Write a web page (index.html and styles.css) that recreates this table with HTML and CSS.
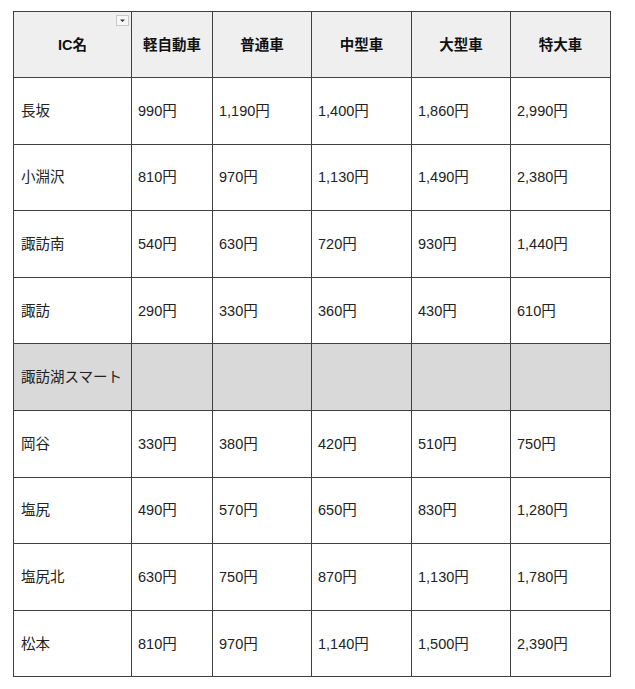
FILE: index.html
```html
<!DOCTYPE html>
<html lang="ja">
<head>
<meta charset="utf-8">
<link rel="stylesheet" href="styles.css">
</head>
<body>
<table class="fares">
  <colgroup>
    <col class="c-name">
    <col class="c-kei">
    <col class="c-w">
    <col class="c-w2">
    <col class="c-w">
    <col class="c-w2">
  </colgroup>
  <thead>
    <tr>
      <th class="th-name">IC名<span class="filter"><svg width="13" height="11" viewBox="0 0 13 11"><rect x="0.5" y="0.5" width="12" height="10" fill="#f7f7f7" stroke="#c8c8c8"/><path d="M4 4.5 L9 4.5 L6.5 7 Z" fill="#333"/></svg></span></th>
      <th>軽自動車</th>
      <th>普通車</th>
      <th>中型車</th>
      <th>大型車</th>
      <th>特大車</th>
    </tr>
  </thead>
  <tbody>
    <tr><td>長坂</td><td>990円</td><td>1,190円</td><td>1,400円</td><td>1,860円</td><td>2,990円</td></tr>
    <tr><td>小淵沢</td><td>810円</td><td>970円</td><td>1,130円</td><td>1,490円</td><td>2,380円</td></tr>
    <tr><td>諏訪南</td><td>540円</td><td>630円</td><td>720円</td><td>930円</td><td>1,440円</td></tr>
    <tr><td>諏訪</td><td>290円</td><td>330円</td><td>360円</td><td>430円</td><td>610円</td></tr>
    <tr class="grey"><td>諏訪湖スマート</td><td></td><td></td><td></td><td></td><td></td></tr>
    <tr><td>岡谷</td><td>330円</td><td>380円</td><td>420円</td><td>510円</td><td>750円</td></tr>
    <tr><td>塩尻</td><td>490円</td><td>570円</td><td>650円</td><td>830円</td><td>1,280円</td></tr>
    <tr><td>塩尻北</td><td>630円</td><td>750円</td><td>870円</td><td>1,130円</td><td>1,780円</td></tr>
    <tr><td>松本</td><td>810円</td><td>970円</td><td>1,140円</td><td>1,500円</td><td>2,390円</td></tr>
  </tbody>
</table>
</body>
</html>
```
FILE: styles.css
```css
html, body {
  margin: 0;
  padding: 0;
  background: #fff;
}
body {
  padding: 11px 0 0 13px;
  font-family: "Liberation Sans", Arial, "Noto Sans CJK JP", sans-serif;
  font-size: 14.5px;
  color: #222;
}
.fares {
  border-collapse: collapse;
  table-layout: fixed;
  width: 598px;
}
.c-name { width: 118px; }
.c-kei { width: 81px; }
.c-w { width: 99px; }
.c-w2 { width: 100px; }
.fares th,
.fares td {
  border: 1px solid #404040;
  padding: 0 0 3px 6px;
  vertical-align: middle;
  white-space: nowrap;
}
.fares thead tr { height: 66px; }
.fares tbody tr { height: 66.6px; }
.fares th {
  background: #efefef;
  font-weight: bold;
  text-align: center;
  padding: 0 0 3px 0;
  color: #111;
}
.th-name {
  position: relative;
}
.fares td:first-child { padding-left: 7px; }
.filter {
  position: absolute;
  top: 3px;
  right: 2px;
  width: 13px;
  height: 11px;
  line-height: 0;
}
.grey td { background: #d9d9d9; }
```
